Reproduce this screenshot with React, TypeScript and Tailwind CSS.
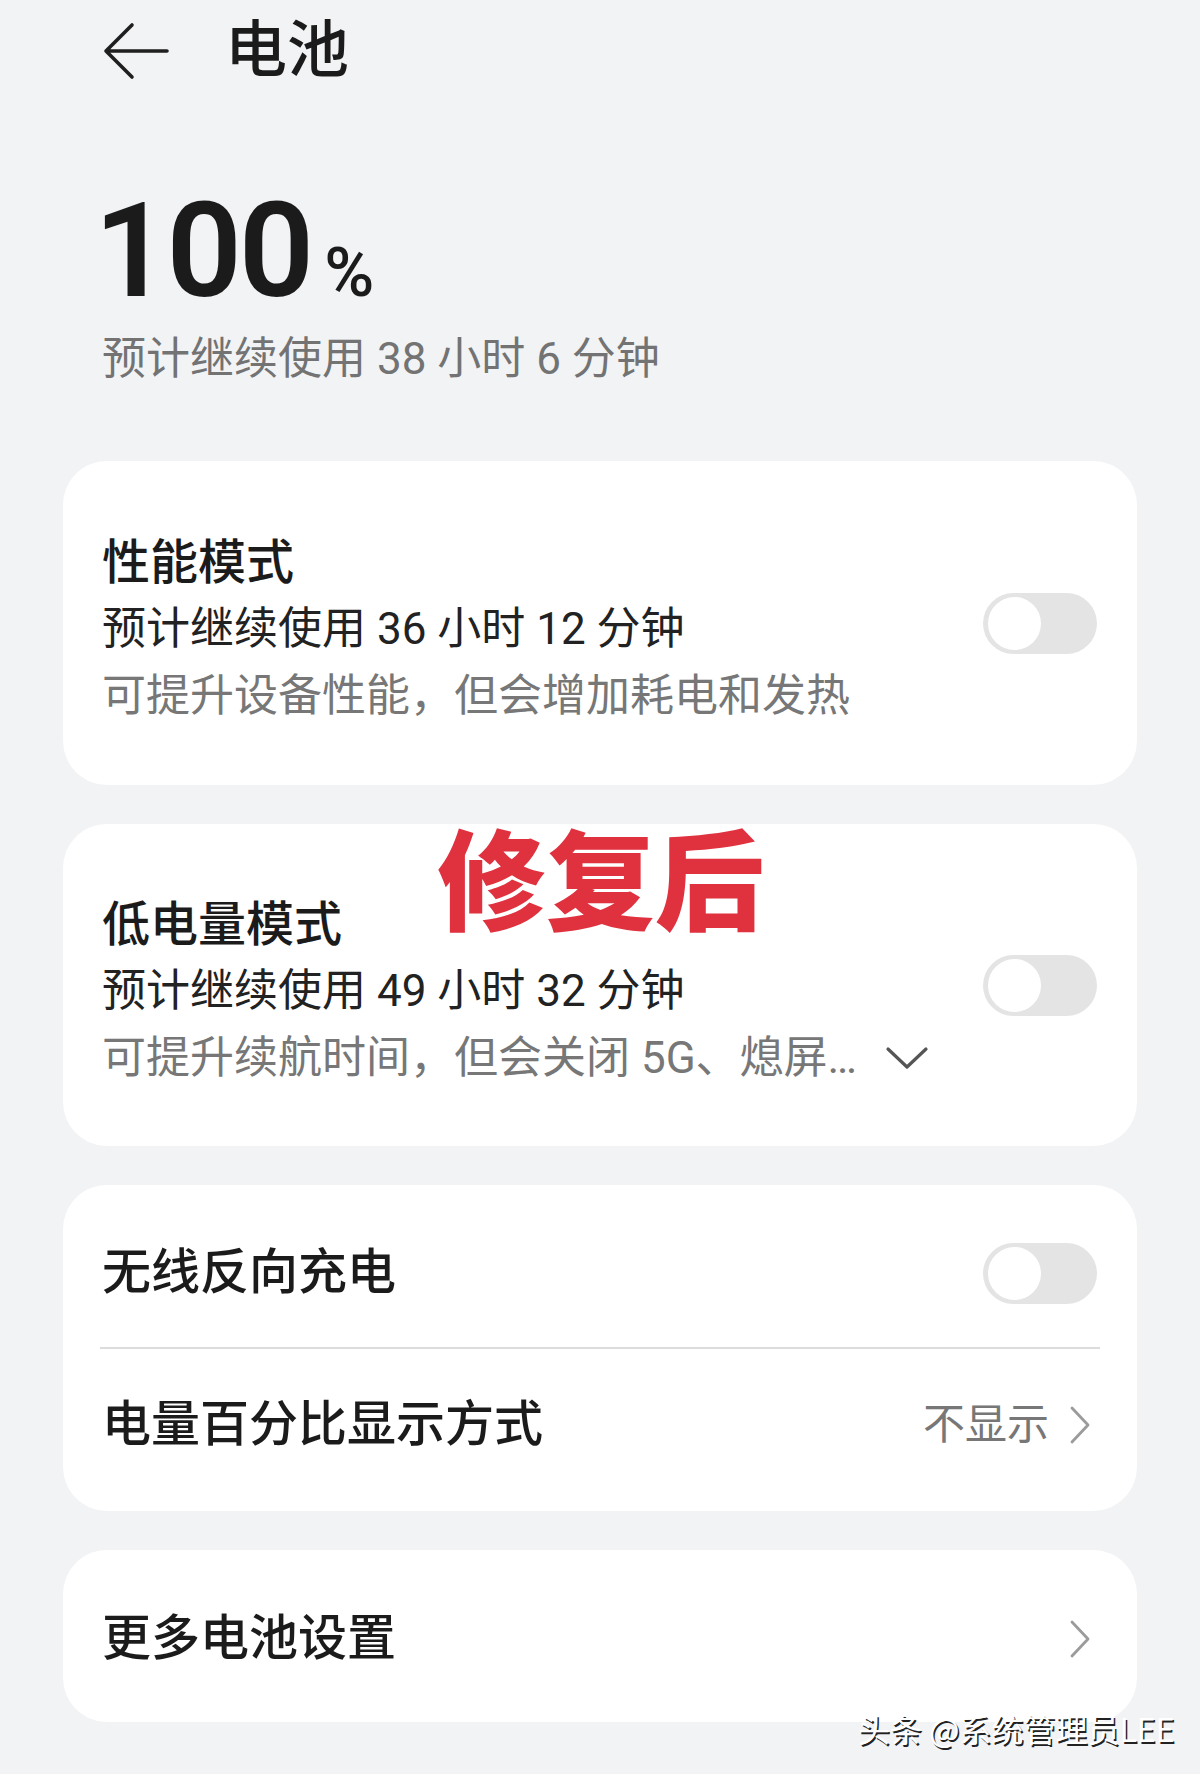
import React from "react";

function Toggle() {
  return (
    <div className="relative h-[61px] w-[114px] shrink-0 rounded-full bg-[#e4e4e4]">
      <div className="absolute left-[5px] top-[4px] h-[53px] w-[53px] rounded-full bg-white" />
    </div>
  );
}

function ChevronRight() {
  return (
    <svg width="22" height="40" viewBox="0 0 22 40" fill="none" className="shrink-0">
      <path d="M3 3 L19 20 L3 37" stroke="#9b9b9b" strokeWidth="2.8" strokeLinecap="round" strokeLinejoin="round" />
    </svg>
  );
}

function ChevronDown() {
  return (
    <svg width="44" height="26" viewBox="0 0 44 26" fill="none" className="shrink-0">
      <path d="M3 4 L22 22 L41 4" stroke="#555" strokeWidth="3.2" strokeLinecap="round" strokeLinejoin="round" />
    </svg>
  );
}

function ModeCard({
  title,
  est,
  desc,
  h,
  chevron,
}: {
  title: string;
  est: string;
  desc: string;
  h: string;
  chevron?: boolean;
}) {
  return (
    <div className={`mx-[63px] flex items-center justify-between rounded-[44px] bg-white pl-[39px] pr-[40px] ${h}`}>
      <div className="flex flex-col pt-[12px]">
        <div className="h-[67px] text-[48px] font-medium leading-[67px] text-[#1b1b1b]">{title}</div>
        <div className="h-[67px] text-[44px] leading-[67px] text-[#222]">{est}</div>
        <div className="flex h-[67px] items-center gap-[28px] text-[44px] leading-[67px] text-[#777]">
          <span>{desc}</span>
          {chevron && <ChevronDown />}
        </div>
      </div>
      <Toggle />
    </div>
  );
}

export default function App() {
  return (
    <div className="relative min-h-[1774px] w-[1200px] overflow-hidden bg-[#f2f3f5] font-[family-name:Roboto,'Noto_Sans_CJK_SC',sans-serif] text-[#1b1b1b]">
      {/* Header */}
      <div className="flex h-[102px] items-center pl-[103px]">
        <svg width="66" height="60" viewBox="0 0 66 60" fill="none" className="shrink-0">
          <path d="M64 30 H3 M29 4 L3 30 L29 56" stroke="#1f1f1f" strokeWidth="3.6" strokeLinecap="round" strokeLinejoin="round" />
        </svg>
        <div className="ml-[56px] text-[62px] font-medium leading-[74px] text-[#1b1b1b]">电池</div>
      </div>

      {/* Battery level */}
      <div className="mt-[83px] flex items-baseline pl-[94px] leading-none">
        <span className="text-[132px] font-semibold tracking-[-3px] text-[#1b1b1b]">100</span>
        <span className="ml-[13px] text-[68px] font-medium text-[#1b1b1b]">%</span>
      </div>
      <div className="mt-[14px] pl-[102px] text-[44px] leading-[56px] text-[#737373]">预计继续使用 38 小时 6 分钟</div>

      <div className="mt-[74px] flex flex-col gap-[39px]">
        <ModeCard
          title="性能模式"
          est="预计继续使用 36 小时 12 分钟"
          desc="可提升设备性能，但会增加耗电和发热"
          h="h-[324px]"
        />
        <ModeCard
          title="低电量模式"
          est="预计继续使用 49 小时 32 分钟"
          desc="可提升续航时间，但会关闭 5G、熄屏…"
          h="h-[322px]"
          chevron
        />

        <div className="mx-[63px] rounded-[44px] bg-white">
          <div className="flex h-[162px] items-center justify-between pl-[39px] pr-[40px] pt-[14px]">
            <div className="text-[49px] font-medium text-[#1b1b1b]">无线反向充电</div>
            <Toggle />
          </div>
          <div className="mx-[37px] h-[1.5px] bg-[#dcdcdc]" />
          <div className="flex h-[162px] items-center justify-between pb-[10px] pl-[39px] pr-[46px]">
            <div className="text-[49px] font-medium text-[#1b1b1b]">电量百分比显示方式</div>
            <div className="flex items-center gap-[20px]">
              <span className="text-[42px] text-[#777]">不显示</span>
              <ChevronRight />
            </div>
          </div>
        </div>

        <div className="mx-[63px] flex h-[172px] items-center justify-between rounded-[44px] bg-white pl-[39px] pr-[46px] pt-[6px]">
          <div className="text-[49px] font-medium text-[#1b1b1b]">更多电池设置</div>
          <ChevronRight />
        </div>
      </div>

      {/* Annotation overlay */}
      <div className="absolute left-[437px] top-[831px] text-[109px] font-black leading-none text-[#e0313f]">修复后</div>

      {/* Watermark */}
      <div className="absolute left-[858px] top-[1707px] font-[family-name:'Noto_Sans_CJK_SC',sans-serif] text-[32px] leading-[42px] text-white [text-shadow:1.5px_1.5px_0_#222]">
        头条 @系统管理员LEE
      </div>
    </div>
  );
}
